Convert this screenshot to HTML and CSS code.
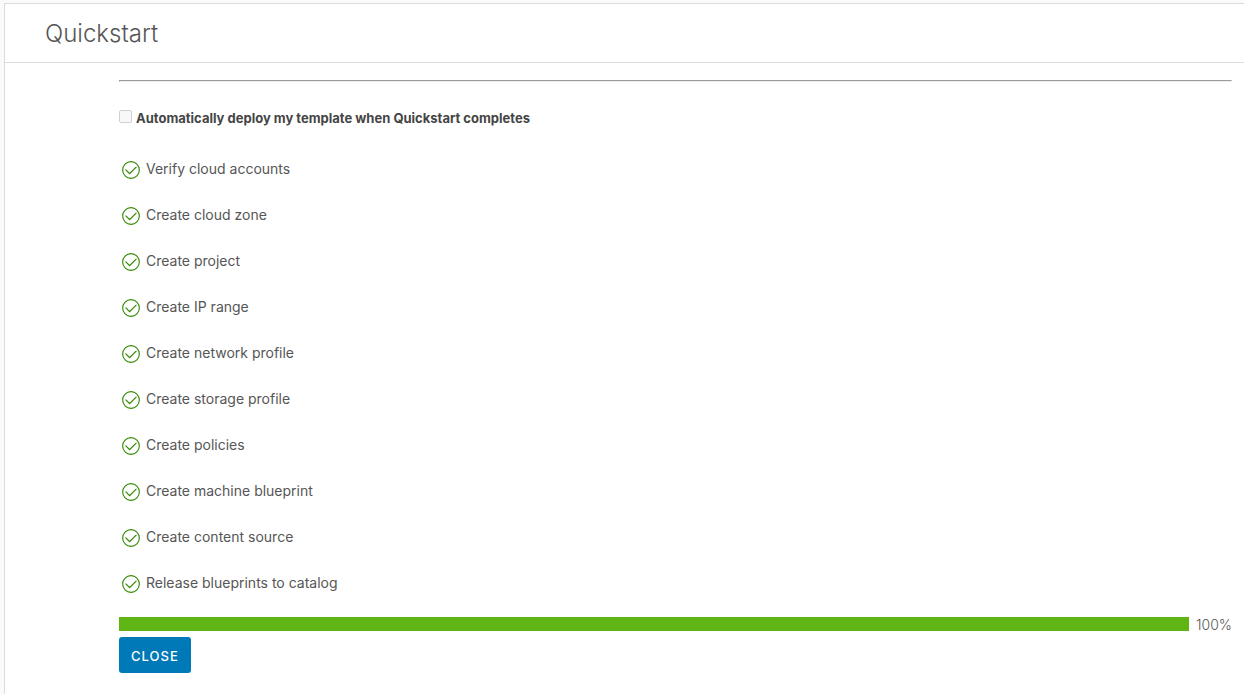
FILE: index.html
```html
<!DOCTYPE html>
<html lang="en">
<head>
<meta charset="utf-8">
<title>Quickstart</title>
<link rel="stylesheet" href="styles.css">
</head>
<body>
<svg class="sprite" aria-hidden="true">
  <symbol id="check-circle" viewBox="0 0 36 36">
    <path d="M18,2A16,16,0,1,0,34,18,16,16,0,0,0,18,2Zm0,30A14,14,0,1,1,32,18,14,14,0,0,1,18,32Z"/>
    <path d="M28,12.1a1,1,0,0,0-1.41,0L15.49,23.15l-6-6A1,1,0,0,0,8,18.53L15.49,26,28,13.52A1,1,0,0,0,28,12.1Z"/>
  </symbol>
</svg>
<main class="panel">
  <header class="panel-header">
    <h1 class="title">Quickstart</h1>
  </header>
  <section class="content">
    <hr class="divider">
    <div class="option">
      <input class="option-box" type="checkbox" id="auto-deploy" disabled>
      <label class="option-label" for="auto-deploy">Automatically deploy my template when Quickstart completes</label>
    </div>
    <ul class="steps">
      <li class="step"><svg class="step-icon"><use href="#check-circle"/></svg><span class="step-text">Verify cloud accounts</span></li>
      <li class="step"><svg class="step-icon"><use href="#check-circle"/></svg><span class="step-text">Create cloud zone</span></li>
      <li class="step"><svg class="step-icon"><use href="#check-circle"/></svg><span class="step-text">Create project</span></li>
      <li class="step"><svg class="step-icon"><use href="#check-circle"/></svg><span class="step-text">Create IP range</span></li>
      <li class="step"><svg class="step-icon"><use href="#check-circle"/></svg><span class="step-text">Create network profile</span></li>
      <li class="step"><svg class="step-icon"><use href="#check-circle"/></svg><span class="step-text">Create storage profile</span></li>
      <li class="step"><svg class="step-icon"><use href="#check-circle"/></svg><span class="step-text">Create policies</span></li>
      <li class="step"><svg class="step-icon"><use href="#check-circle"/></svg><span class="step-text">Create machine blueprint</span></li>
      <li class="step"><svg class="step-icon"><use href="#check-circle"/></svg><span class="step-text">Create content source</span></li>
      <li class="step"><svg class="step-icon"><use href="#check-circle"/></svg><span class="step-text">Release blueprints to catalog</span></li>
    </ul>
    <div class="progress">
      <div class="progress-track" role="progressbar" aria-label="Quickstart progress" aria-valuenow="100" aria-valuemin="0" aria-valuemax="100">
        <div class="progress-fill" style="width: 100%"></div>
      </div>
      <span class="progress-value">100%</span>
    </div>
    <button class="close-button" type="button">CLOSE</button>
  </section>
</main>
</body>
</html>
```
FILE: styles.css
```css
* {
  box-sizing: border-box;
}

body {
  margin: 0;
  padding: 3px 0 0 4px;
  min-height: 100vh;
  display: flex;
  flex-direction: column;
  background: #fafafa;
  color: #565656;
  font: 400 14px/24px Inter, "Open Sans", sans-serif;
}

.sprite {
  display: none;
}

.panel {
  flex: 1;
  background: #fff;
  border: solid #dcdcdc;
  border-width: 1px 0 0 1px;
}

.panel-header {
  padding: 12px 40px 10px;
  border-bottom: 1px solid #dcdcdc;
}

.title {
  margin: 0;
  font-size: 24px;
  line-height: 36px;
  font-weight: 300;
}

.content {
  padding: 17px 12px 20px 114px;
}

.divider {
  margin: 0;
  border: 1px solid;
  border-color: #9a9a9a #eee #eee #9a9a9a;
}

.option {
  display: flex;
  align-items: center;
  gap: 4px;
  margin-top: 24px;
}

.option-box {
  appearance: none;
  width: 13px;
  height: 13px;
  margin: 0 0 3px;
  border: 1px solid #d0d0d0;
  border-radius: 2px;
  background: #f8f8f8;
}

.option-label {
  color: #454545;
  font-size: 13px;
  font-weight: 700;
}

.steps {
  list-style: none;
  margin: 17px 0 10px;
  padding: 0;
}

.step {
  display: flex;
  align-items: center;
  gap: 5px;
  height: 46px;
  padding-left: 2px;
}

.step-icon {
  width: 20px;
  height: 20px;
  fill: #318700;
}

.step-text {
  padding-bottom: 2px;
}

.progress {
  display: flex;
  align-items: center;
  gap: 7px;
  height: 14px;
}

.progress-track {
  flex: 1;
  height: 14px;
  background: #eee;
}

.progress-fill {
  height: 100%;
  background: #60b515;
}

.progress-value {
  padding-top: 2px;
  font-weight: 300;
}

.close-button {
  display: block;
  height: 36px;
  margin-top: 6px;
  padding: 1px 12px 0;
  border: 0;
  border-radius: 3px;
  background: #0079b8;
  color: #fff;
  font: 500 13px/36px Inter, "Open Sans", sans-serif;
  letter-spacing: 1px;
}
```
